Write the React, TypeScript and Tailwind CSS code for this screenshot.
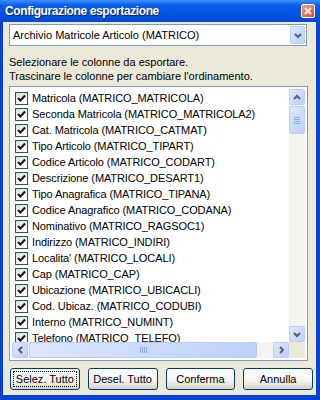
import { useState } from "react";

const COLS = [
  "Matricola (MATRICO_MATRICOLA)",
  "Seconda Matricola (MATRICO_MATRICOLA2)",
  "Cat. Matricola (MATRICO_CATMAT)",
  "Tipo Articolo (MATRICO_TIPART)",
  "Codice Articolo (MATRICO_CODART)",
  "Descrizione (MATRICO_DESART1)",
  "Tipo Anagrafica (MATRICO_TIPANA)",
  "Codice Anagrafico (MATRICO_CODANA)",
  "Nominativo (MATRICO_RAGSOC1)",
  "Indirizzo (MATRICO_INDIRI)",
  "Localita' (MATRICO_LOCALI)",
  "Cap (MATRICO_CAP)",
  "Ubicazione (MATRICO_UBICACLI)",
  "Cod. Ubicaz. (MATRICO_CODUBI)",
  "Interno (MATRICO_NUMINT)",
  "Telefono (MATRICO_TELEFO)",
];

const FONT = "font-['Liberation_Sans',Arial,sans-serif]";

function Arrow({ dir }: { dir: "up" | "down" | "left" | "right" }) {
  const pts: Record<string, string> = {
    up: "2,7 5,4 8,7",
    down: "2,4 5,7 8,4",
    left: "7,2 4,5 7,8",
    right: "4,2 7,5 4,8",
  };
  return (
    <svg width="10" height="10" viewBox="0 0 10 10">
      <polyline points={pts[dir]} fill="none" stroke="#4d6185" strokeWidth="2" />
    </svg>
  );
}

const SB_BTN =
  "flex items-center justify-center rounded-[2px] border border-[#b9cdf8] bg-[linear-gradient(135deg,#dde8fe,#bcd0fa)]";

function Check({ on }: { on: boolean }) {
  return (
    <span className="w-[13px] h-[13px] shrink-0 border border-[#1c5180] bg-[linear-gradient(135deg,#dcdcd7,#ffffff)] flex items-center justify-center">
      {on && (
        <svg width="9" height="9" viewBox="0 0 9 9">
          <polyline points="1,4 3.5,6.5 8,1.5" fill="none" stroke="#111" strokeWidth="2" />
        </svg>
      )}
    </span>
  );
}

export default function App() {
  const [checked, setChecked] = useState<boolean[]>(COLS.map(() => true));

  return (
    <div className={`w-[320px] h-[400px] flex flex-col bg-[#0842d4] ${FONT}`}>
      {/* title bar */}
      <div className="h-[22px] shrink-0 flex items-center justify-between pl-[5px] pr-[5px] bg-[linear-gradient(180deg,#3c8ffb_0%,#0a5de9_25%,#0054e3_60%,#0048d4_100%)]">
        <span className="text-white font-bold text-[12px] tracking-[-0.4px] [text-shadow:1px_1px_#0a1f6a]">
          Configurazione esportazione
        </span>
        <span className="w-[14px] h-[14px] rounded-[2px] border border-white bg-[linear-gradient(135deg,#f29c7e,#e04b1f)] flex items-center justify-center">
          <svg width="8" height="8" viewBox="0 0 8 8">
            <path d="M1 1L7 7M7 1L1 7" stroke="#fff" strokeWidth="1.8" />
          </svg>
        </span>
      </div>

      {/* client */}
      <div className="flex-1 ml-[3px] mr-[4px] mb-[5px] bg-[#ece9d8] flex flex-col pl-[6px] pr-[3px] pt-[2px] text-[11px] text-black">
        <div className="h-[22px] w-[298px] border border-[#7f9db9] bg-white flex items-center justify-between pl-[3px] pr-[1px]">
          <span>Archivio Matricole Articolo (MATRICO)</span>
          <span className={`w-[15px] h-[18px] ${SB_BTN}`}>
            <Arrow dir="down" />
          </span>
        </div>

        <div className="mt-[9px] leading-[14px]">
          <div>Selezionare le colonne da esportare.</div>
          <div>Trascinare le colonne per cambiare l'ordinamento.</div>
        </div>

        <div className="mt-[3px] w-[299px] h-[275px] border border-[#7f9db9] bg-white p-[2px] flex flex-col">
          <div className="flex flex-1 min-h-0">
            <div className="flex-1 overflow-hidden pt-[1px]">
              {COLS.map((c, i) => (
                <div
                  key={c}
                  className="h-[16px] flex items-center gap-[4px] pl-[3px] whitespace-nowrap cursor-default tracking-[-0.1px]"
                  onClick={() => setChecked(checked.map((v, j) => (j === i ? !v : v)))}
                >
                  <Check on={checked[i]} />
                  <span>{c}</span>
                </div>
              ))}
            </div>
            {/* vertical scrollbar */}
            <div className="w-[16px] flex flex-col bg-[#f4f3ee]">
              <div className={`h-[16px] ${SB_BTN}`}>
                <Arrow dir="up" />
              </div>
              <div className={`mt-[1px] h-[28px] ${SB_BTN} flex-col gap-[1px]`}>
                <span className="w-[6px] h-[1px] bg-[#8fabf0]" />
                <span className="w-[6px] h-[1px] bg-[#8fabf0]" />
                <span className="w-[6px] h-[1px] bg-[#8fabf0]" />
                <span className="w-[6px] h-[1px] bg-[#8fabf0]" />
              </div>
              <div className="flex-1" />
              <div className={`h-[16px] ${SB_BTN}`}>
                <Arrow dir="down" />
              </div>
            </div>
          </div>
          {/* horizontal scrollbar */}
          <div className="h-[16px] flex bg-[#f4f3ee]">
            <div className={`w-[16px] ${SB_BTN}`}>
              <Arrow dir="left" />
            </div>
            <div className={`ml-[1px] w-[228px] ${SB_BTN} gap-[1px]`}>
              <span className="w-[1px] h-[6px] bg-[#8fabf0]" />
              <span className="w-[1px] h-[6px] bg-[#8fabf0]" />
              <span className="w-[1px] h-[6px] bg-[#8fabf0]" />
              <span className="w-[1px] h-[6px] bg-[#8fabf0]" />
            </div>
            <div className="flex-1" />
            <div className={`w-[16px] ${SB_BTN}`}>
              <Arrow dir="right" />
            </div>
            <div className="w-[16px] bg-[#ece9d8]" />
          </div>
        </div>

        {/* buttons */}
        <div className="mt-[7px] flex gap-[8px] pl-[1px]">
          {["Selez. Tutto", "Desel. Tutto", "Conferma", "Annulla"].map((b, i) => (
            <button
              key={b}
              className="w-[70px] h-[22px] rounded-[3px] border border-[#003c74] bg-[linear-gradient(180deg,#ffffff_0%,#f4f3ee_60%,#d6d0c5_100%)] text-[11px] text-black flex items-center justify-center p-[2px]"
            >
              <span
                className={`w-full h-full flex items-center justify-center ${
                  i === 0 ? "outline outline-1 outline-dotted outline-black -outline-offset-1" : ""
                }`}
              >
                {b}
              </span>
            </button>
          ))}
        </div>
      </div>
    </div>
  );
}
